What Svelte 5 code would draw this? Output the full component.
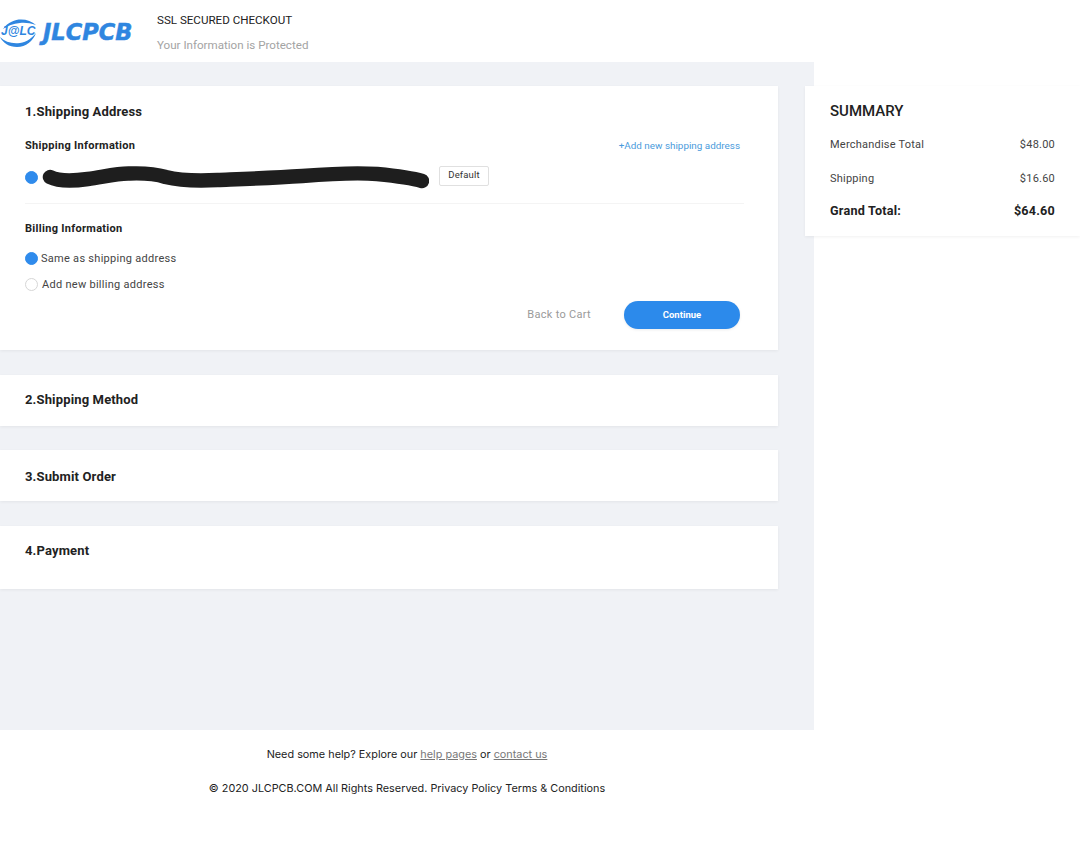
<script>
  const summary = [
    { label: 'Merchandise Total', value: '$48.00' },
    { label: 'Shipping', value: '$16.60' }
  ];
</script>

<div class="page">
  <header class="header">
    <div class="logo">
      <div class="mark">
        <svg viewBox="0 0 38 28" width="38" height="28" aria-hidden="true">
          <path d="M3 10 C8 3 15 .5 21 .5 C27 .5 32 2.500 36 6 C30 4 25 3.500 20 4 C13 4.500 8 7 3 10 Z" fill="#2f86e0" />
          <path d="M0 18 C3 24 9 28 17 28 C26 28 33 22 36 14 C32 19 27 23 20 24 C12 25 5 23 0 18 Z" fill="#2f86e0" />
        </svg>
        <span class="mark-text">J@LC</span>
      </div>
      <span class="wordmark">JLCPCB</span>
    </div>
    <div class="secure">
      <div class="secure-title">SSL SECURED CHECKOUT</div>
      <div class="secure-sub">Your Information is Protected</div>
    </div>
  </header>

  <div class="content">
    <main class="main">
      <section class="card card-address">
        <h2>1.Shipping Address</h2>
        <div class="row-between">
          <h3>Shipping Information</h3>
          <span class="add-link">+Add new shipping address</span>
        </div>
        <div class="address">
          <span class="radio on"></span>
          <svg class="scribble" viewBox="0 0 392 24" width="391" height="24" aria-hidden="true">
            <path d="M12 11 C22 16 36 15 50 13 C65 11 80 7 92 7.500 C105 7 118 8 128 11 C140 14 160 15 180 14 C205 13 235 12 265 10 C290 8 320 6.500 340 8 C360 10 375 12 385 15" />
          </svg>
          <span class="default">Default</span>
        </div>
        <div class="divider"></div>
        <h3 class="billing-title">Billing Information</h3>
        <div class="option first"><span class="radio on"></span><span class="lbl-on">Same as shipping address</span></div>
        <div class="option second"><span class="radio"></span><span class="lbl-off">Add new billing address</span></div>
        <div class="actions">
          <span class="back">Back to Cart</span>
          <button class="continue" type="button">Continue</button>
        </div>
      </section>

      <section class="card card-row method"><h2>2.Shipping Method</h2></section>
      <section class="card card-row submit"><h2>3.Submit Order</h2></section>
      <section class="card card-row last"><h2>4.Payment</h2></section>
    </main>

    <aside class="summary">
      <div class="summary-title">SUMMARY</div>
      {#each summary as item}
        <div class="sum-row"><span>{item.label}</span><span>{item.value}</span></div>
      {/each}
      <div class="sum-row total"><span>Grand Total:</span><span>$64.60</span></div>
    </aside>
  </div>

  <footer class="footer">
    <p class="help">Need some help? Explore our <span class="u">help pages</span> or <span class="u">contact us</span></p>
    <p class="legal">© 2020 JLCPCB.COM All Rights Reserved. Privacy Policy Terms &amp; Conditions</p>
  </footer>
</div>

<style>
  :global(body) {
    margin: 0;
    background: #fff;
    font-family: Roboto, "Liberation Sans", sans-serif;
    color: #222;
  }
  .page { width: 1080px; height: 865px; overflow: hidden; }
  .header { display: flex; height: 62px; background: #fff; }
  .logo { display: flex; align-items: center; width: 157px; height: 62px; flex: none; }
  .mark { position: relative; width: 38px; height: 28px; flex: none; margin-top: 4px; }
  .mark svg { display: block; }
  .mark-text {
    position: absolute; left: 1px; top: 5px;
    font: italic 700 12px/14px "Liberation Sans", sans-serif;
    color: #2f86e0; white-space: nowrap;
  }
  .wordmark {
    margin-left: 5px; margin-top: 2px;
    font: italic 700 22.5px/28px "DejaVu Sans", sans-serif;
    color: #2f86e0;
    -webkit-text-stroke: 0.5px #2f86e0;
  }
  .secure { padding-top: 13px; font-size: 11.6px; line-height: 14px; }
  .secure-title { color: #222; }
  .secure-sub { margin-top: 11px; color: #a3a3a3; }

  .content { display: grid; grid-template-columns: 814px 275px; }
  .main { background: #f0f2f6; height: 668px; padding-top: 24px; box-sizing: border-box; }
  .card { width: 778px; background: #fff; box-shadow: 0 1px 3px rgba(0,0,0,.06); box-sizing: border-box; padding: 0 25px; }
  .card-address { height: 264px; padding-top: 17px; margin-bottom: 25px; }
  .card-row { height: 51px; margin-bottom: 24px; }
  .method { padding-top: 16px; }
  .submit { padding-top: 18px; margin-bottom: 25px; }
  .card-row.last { height: 63px; padding-top: 16px; margin-bottom: 0; }
  h2 { margin: 0; font-size: 13px; line-height: 17px; font-weight: 700; color: #222; letter-spacing: .15px; }
  h3 { margin: 0; font-size: 11px; line-height: 14px; font-weight: 700; color: #222; letter-spacing: .3px; }
  .row-between { display: flex; justify-content: space-between; align-items: center; width: 715px; margin-top: 19px; height: 14px; }
  .add-link { font-size: 9.9px; line-height: 14px; color: #4a9bdc; }
  .address { display: flex; align-items: center; height: 24px; margin-top: 12px; }
  .radio { width: 13px; height: 13px; border-radius: 50%; border: 1px solid #d6d6d6; box-sizing: border-box; flex: none; background: #fff; }
  .radio.on { background: #2f8bec; border-color: #2f8bec; }
  .scribble { display: block; margin-left: 0; flex: none; margin-top: 1px; }
  .scribble path { fill: none; stroke: #1e1e1e; stroke-width: 14.5; stroke-linecap: round; stroke-linejoin: round; }
  .default {
    margin-left: 10px; margin-top: -2px; width: 50px; height: 20px; box-sizing: border-box;
    border: 1px solid #e0e0e0; border-radius: 2px;
    font-size: 9.5px; line-height: 16px; text-align: center; color: #333; letter-spacing: .15px;
  }
  .divider { width: 719px; height: 1px; background: #f4f4f4; margin-top: 14px; }
  .billing-title { margin-top: 18px; }
  .option { display: flex; align-items: center; font-size: 11px; line-height: 13px; color: #444; letter-spacing: .28px; }
  .option.first { margin-top: 16px; }
  .option.second { margin-top: 13px; }
  .lbl-on { margin-left: 3px; }
  .lbl-off { margin-left: 4px; }
  .actions { display: flex; justify-content: flex-end; align-items: center; width: 715px; margin-top: 10px; }
  .back { font-size: 11px; color: #9a9a9a; letter-spacing: .3px; margin-right: 33px; margin-top: -2px; }
  .continue {
    width: 116px; height: 28px; border: 0; border-radius: 14px; padding: 0;
    background: #2c8aeb; color: #fff;
    font: 700 9.5px/28px Roboto, sans-serif;
    box-shadow: 0 1px 3px rgba(0,0,0,.08);
  }

  .summary {
    margin-left: -9px; margin-top: 24px; height: 150px; width: 275px; box-sizing: border-box;
    padding: 16px 25px 0 25px; background: #fff; position: relative;
    box-shadow: 0 1px 3px rgba(0,0,0,.06);
  }
  .summary-title { font-size: 15px; line-height: 18px; font-weight: 500; color: #222; }
  .sum-row { display: flex; justify-content: space-between; font-size: 11px; line-height: 14px; color: #444; letter-spacing: .22px; width: 225px; }
  .sum-row:nth-child(2) { margin-top: 18px; }
  .sum-row:nth-child(3) { margin-top: 20px; }
  .sum-row.total { font-size: 12.6px; font-weight: 700; color: #222; margin-top: 18px; }

  .footer { width: 814px; text-align: center; font-family: Inter, Roboto, sans-serif; font-size: 10.85px; line-height: 14px; color: #222; }
  .footer .help { margin: 0; padding-top: 17px; }
  .footer .legal { margin: 20px 0 0; }
  .u { color: #777; text-decoration: underline; }
</style>
